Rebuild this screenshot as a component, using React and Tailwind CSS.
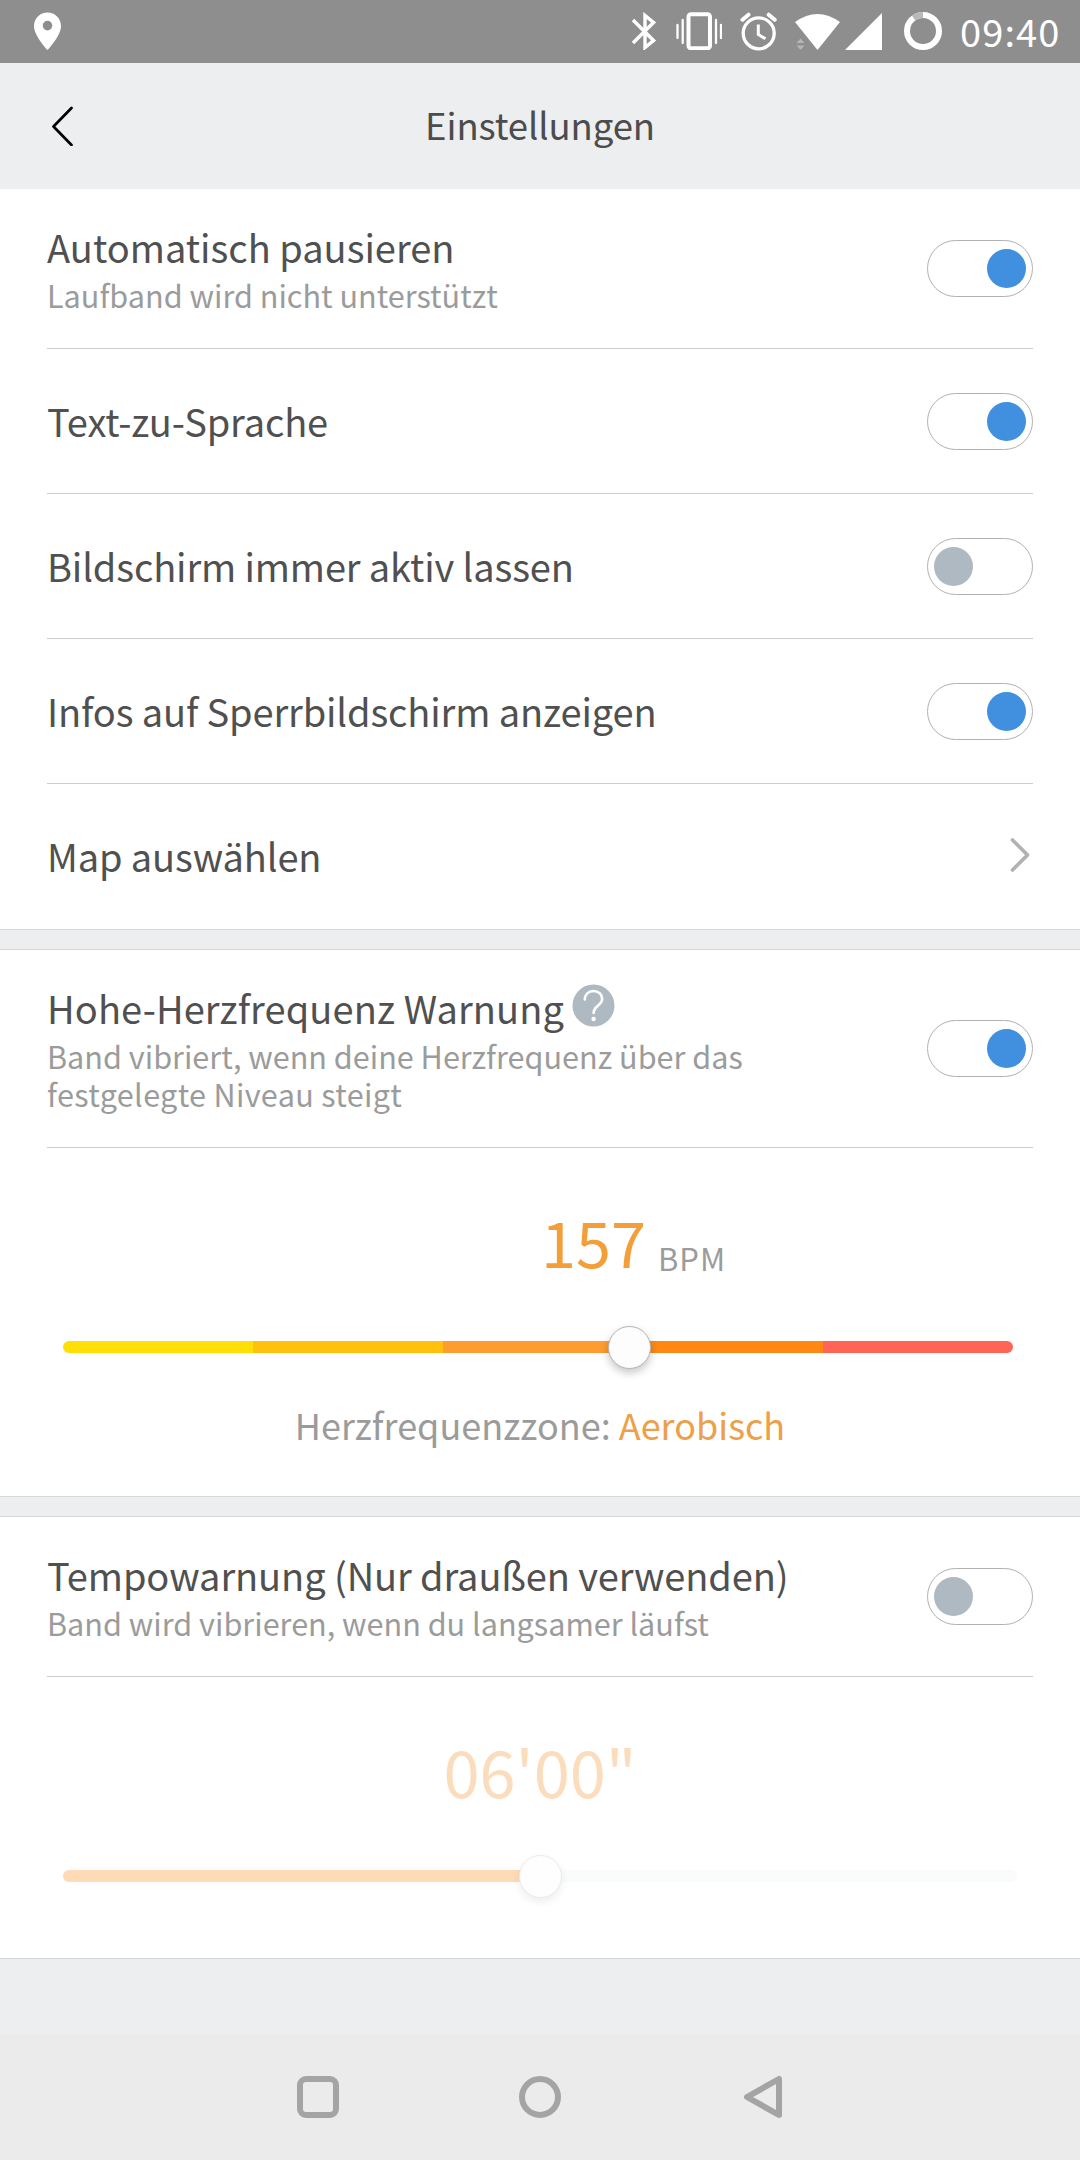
import { useState } from "react";

const heartZones = [
  "bg-[#ffdf08] rounded-l-full",
  "bg-[#ffc10c]",
  "bg-[#ff9c2f]",
  "bg-[#ff8813]",
  "bg-[#ff6557] rounded-r-full",
];

const StatusBar = () => (
  <div className="flex h-[63px] items-start bg-[#8e8e8e] pt-3 pr-[19px] pl-[34px] text-white">
    {/* Location */}
    <svg className="h-[38px] w-[27px]" viewBox="34 12 27 38" fill="currentColor">
      <path
        fillRule="evenodd"
        d="M47.5 12.6C40 12.6 34 18.5 34 26c0 10 13.5 24 13.5 24S61 36 61 26c0-7.5-6-13.4-13.5-13.4ZM47.5 20.8a4.800 4.800 0 1 1 0 9.600 4.800 4.800 0 0 1 0-9.600Z"
      />
    </svg>

    {/* Bluetooth */}
    <svg className="ml-auto h-[38px] w-6" viewBox="632 12 24 38" fill="none" stroke="currentColor" strokeWidth="3.4">
      <path d="M633 20 653.500 40.500 645 47.500V15.500L653.500 22.500 633 43" />
    </svg>

    {/* Vibration */}
    <svg className="ml-5 h-[38px] w-[46px]" viewBox="676 12 46 38" fill="none" stroke="currentColor">
      <rect x="688.5" y="14.2" width="21.5" height="34" rx="2.5" strokeWidth="4" />
      <path d="M682.7 20V43M716 20V43M677.5 25V38M721 25V38" strokeWidth="2.3" strokeLinecap="round" />
    </svg>

    {/* Alarm */}
    <svg className="ml-[18px] h-[39px] w-[37px]" viewBox="740 12 37 39" fill="none" stroke="currentColor">
      <circle cx="758.7" cy="33.3" r="15.5" strokeWidth="3.3" />
      <path d="M758.3 24.5V34.5L765.5 38.8" strokeWidth="3" />
      <path d="M742.5 19.8 748.5 14.7M774.7 19.8 768.7 14.7" strokeWidth="4" strokeLinecap="round" />
    </svg>

    {/* Wifi */}
    <svg className="ml-[18px] h-[38px] w-[45px]" viewBox="795 12 45 38">
      <path d="M795 22Q817.5 5.8 840 22L817.5 50Z" fill="#fff" />
      <path d="M796.5 43 800.5 38.5 804.5 43ZM796.5 45.5H804.5L800.5 50Z" fill="#b5b5b5" />
    </svg>

    {/* Mobile signal */}
    <svg className="ml-[5px] h-[38px] w-[37px]" viewBox="845 12 37 38" fill="currentColor">
      <path d="M882 13V50H845Z" />
    </svg>

    {/* Battery ring */}
    <svg className="ml-[22px] h-[38px] w-[38px]" viewBox="0 0 38 38" fill="none" strokeWidth="6">
      <circle cx="19" cy="19" r="16" stroke="#fff" />
      <path d="M9.6 6.05A16 16 0 0 1 19 3" stroke="#b8b8b8" />
    </svg>

    <span className="ml-[18px] w-[101px] text-[38px] leading-[38px] tracking-[1.1px] whitespace-nowrap">
      09:40
    </span>
  </div>
);

const Header = () => (
  <div className="grid h-[126px] grid-cols-[1fr_auto_1fr] items-center bg-[#edeef0] px-[52px]">
    <button aria-label="Zurück">
      <svg className="h-10 w-[22px]" viewBox="52 106.5 22 40" fill="none" stroke="#000" strokeWidth="2.7" strokeLinecap="round" strokeLinejoin="round">
        <path d="M71.500 108.500 53.500 127 71.500 145.500" />
      </svg>
    </button>
    <h1 className="pb-0.5 text-[36.5px] leading-[54px] tracking-[-0.1px] text-[#4c4c4c]">Einstellungen</h1>
  </div>
);

const Toggle = ({ defaultOn }) => {
  const [on, setOn] = useState(defaultOn);

  return (
    <button
      role="switch"
      aria-checked={on}
      onClick={() => setOn(!on)}
      className={`flex h-[57px] w-[106px] shrink-0 items-center rounded-full border border-[#b2b2b2] bg-white px-1.5 ${
        on ? "justify-end" : "justify-start"
      }`}
    >
      <span className={`h-[39px] w-[39px] rounded-full ${on ? "bg-[#4190df]" : "bg-[#afb9c2]"}`} />
    </button>
  );
};

const SimpleRow = ({ label, children }) => (
  <div className="flex h-[145px] items-center justify-between border-b border-[#cccccc] last:border-transparent">
    <span className="text-[38px] leading-[56px] tracking-[-0.13px]">{label}</span>
    {children}
  </div>
);

const InfoIcon = () => (
  <svg className="mt-1 ml-2 h-[43px] w-[43px]" viewBox="0 0 43 43" fill="none">
    <circle cx="21.5" cy="21.5" r="21" fill="#afb9c2" />
    <path
      d="M12.8 15.5C12.8 10.5 16.5 7 21.5 7S30.2 10.5 30.2 15C30.2 21.5 21.6 21.5 21.6 29"
      stroke="#fff"
      strokeWidth="2.6"
      strokeLinecap="round"
    />
    <circle cx="21.6" cy="35" r="2.2" fill="#fff" />
  </svg>
);

const Gap = () => <div className="h-[21px] border-y border-[#d6d8da] bg-[#edeef0]" />;

const Thumb = ({ className }) => (
  <span className={`absolute top-0 h-[43px] w-[43px] rounded-full border ${className}`} />
);

const App = () => {
  return (
    <div className="flex h-[2160px] w-[1080px] flex-col overflow-hidden bg-[#edeef0] font-['Noto_Sans_CJK_SC','Noto_Sans',sans-serif] text-[#505050]">
      <StatusBar />
      <Header />

      {/* General */}
      <div className="bg-white px-[47px]">
        <div className="flex h-40 items-center justify-between border-b border-[#cccccc]">
          <div className="pb-1">
            <p className="mb-px text-[38px] leading-[56px]">Automatisch pausieren</p>
            <p className="text-[30.6px] leading-[38px] text-[#9b9b9b]">Laufband wird nicht unterstützt</p>
          </div>
          <Toggle defaultOn={true} />
        </div>
        <SimpleRow label="Text-zu-Sprache">
          <Toggle defaultOn={true} />
        </SimpleRow>
        <SimpleRow label="Bildschirm immer aktiv lassen">
          <Toggle defaultOn={false} />
        </SimpleRow>
        <SimpleRow label="Infos auf Sperrbildschirm anzeigen">
          <Toggle defaultOn={true} />
        </SimpleRow>
        <SimpleRow label="Map auswählen">
          <svg className="mr-0.5 h-9 w-[22px]" viewBox="0 0 22 36" fill="none" stroke="#b1b1b1" strokeWidth="3.6" strokeLinecap="round" strokeLinejoin="round">
            <path d="M3.5 2 18.5 17 3.5 32" />
          </svg>
        </SimpleRow>
      </div>

      <Gap />

      {/* Heart rate warning */}
      <div className="h-[546px] bg-white px-[47px]">
        <div className="flex h-[198px] items-center justify-between border-b border-[#cccccc]">
          <div className="pb-1">
            <div className="mb-px flex items-start">
              <p className="text-[38px] leading-[56px] tracking-[0.1px]">Hohe-Herzfrequenz Warnung</p>
              <InfoIcon />
            </div>
            <p className="text-[30.6px] leading-[38px] text-[#9b9b9b]">
              Band vibriert, wenn deine Herzfrequenz über das
            </p>
            <p className="text-[30.6px] leading-[38px] tracking-[0.33px] text-[#9b9b9b]">festgelegte Niveau steigt</p>
          </div>
          <Toggle defaultOn={true} />
        </div>

        <div className="flex items-start pt-[53px] pl-[494px]">
          <span className="text-[63px] leading-[80px] text-[#f49e3a]">157</span>
          <span className="mt-[41px] ml-3 text-[31px] leading-[31px] tracking-[1px] text-[#9b9b9b]">BPM</span>
        </div>

        <div className="relative mx-4 mt-[45px] flex h-[42px] items-center">
          <div className="flex h-3 w-[950px]">
            {heartZones.map((zone) => (
              <span key={zone} className={`h-full flex-1 ${zone}`} />
            ))}
          </div>
          <Thumb className="left-[545px] border-[#b4b4b4] bg-[#fdfdfd] shadow-[0_4px_8px_rgba(0,0,0,0.22)]" />
        </div>

        <p className="mt-[29px] text-center text-[36px] leading-[54px] whitespace-nowrap text-[#9b9b9b]">
          Herzfrequenzzone: <span className="text-[#eda049]">Aerobisch</span>
        </p>
      </div>

      <Gap />

      {/* Pace warning */}
      <div className="h-[442px] border-b border-[#d3d5d7] bg-white px-[47px]">
        <div className="flex h-40 items-center justify-between border-b border-[#cccccc]">
          <div className="pb-1">
            <p className="mb-px text-[38px] leading-[56px] tracking-[-0.1px]">Tempowarnung (Nur draußen verwenden)</p>
            <p className="text-[30.6px] leading-[38px] text-[#9b9b9b]">
              Band wird vibrieren, wenn du langsamer läufst
            </p>
          </div>
          <Toggle defaultOn={false} />
        </div>

        <p className="pt-[53px] text-center text-[65px] leading-[80px] text-[#fbdcbc]">06'00"</p>

        <div className="relative mx-4 mt-[45px] flex h-[42px] items-center">
          <div className="h-3 w-[954px] rounded-full bg-[#fafcfb]">
            <div className="h-full w-1/2 rounded-l-full bg-[#ffdab6]" />
          </div>
          <Thumb className="left-[456px] border-[#ebebeb] bg-[#fefefe] shadow-[0_4px_8px_rgba(0,0,0,0.07)]" />
        </div>
      </div>

      {/* Navigation bar */}
      <div className="mt-auto flex h-[126px] items-center justify-center gap-[180px] bg-[#ebebeb]">
        <span className="h-[42px] w-[42px] rounded-[9px] border-6 border-[#a4a4a4]" />
        <span className="h-[42px] w-[42px] rounded-full border-6 border-[#a4a4a4]" />
        <svg className="h-11 w-[42px]" viewBox="0 0 42 44" fill="none" stroke="#a4a4a4" strokeWidth="6" strokeLinejoin="round">
          <path d="M38 4V40L6 22Z" />
        </svg>
      </div>
    </div>
  );
};

export default App;
